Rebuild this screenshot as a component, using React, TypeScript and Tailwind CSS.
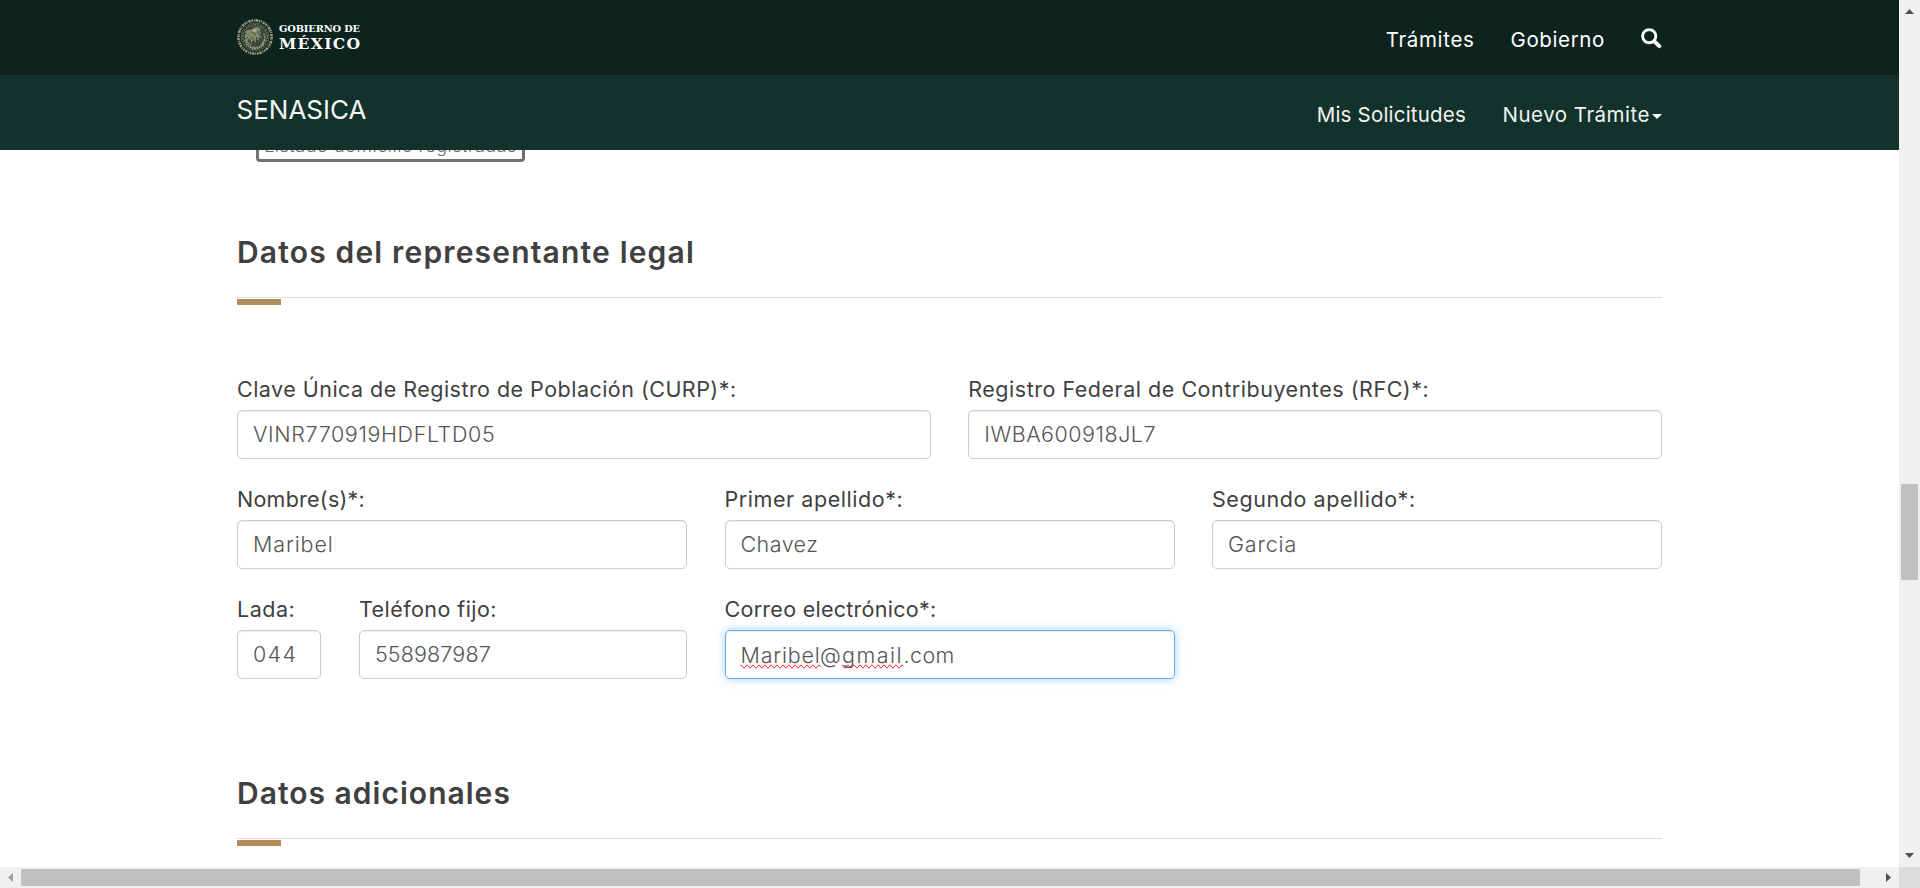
import React from "react";

function Seal() {
  const feathers = [
    "M17 9c3-2 6-1 7 2l-2 1 3 3-3 0 3 4-4-1 2 4-4-2 0 4-3-3-2 4-1-5-4 2 2-4-4 0 3-3c-2-3 1-5 4-4z",
    "M9 15c-1 5 1 9 5 11M27 15c2 5 0 9-4 12M13 28c3 2 7 2 10 0M12 12c-2-1-3 1-2 3",
    "M15 13l4 3M20 12l3 4M14 18l3 4M20 18l-1 5M12 20l2 5M24 20l-2 5",
  ];
  return (
    <svg className="mt-[-2px]" width="36" height="36" viewBox="0 0 36 36" fill="none" aria-hidden="true">
      <circle cx="18" cy="18" r="16.6" stroke="#9d9a7e" strokeWidth="2.6" strokeDasharray="1.7 0.8 0.9 0.9 2.4 0.7" />
      <circle cx="18" cy="18" r="14" stroke="#6b735c" strokeWidth="0.8" />
      <circle cx="18" cy="18" r="12.4" fill="#39493c" stroke="#717760" strokeWidth="1.2" strokeDasharray="2 1" />
      <path d={feathers[0]} fill="#848669" />
      <path d={feathers[1]} stroke="#9a9779" strokeWidth="1.5" strokeDasharray="1.6 0.7" />
      <path d={feathers[2]} stroke="#33443a" strokeWidth="0.9" />
      <path d="M15 11l3-1 2 2-3 1z" fill="#b5b092" />
      <path d="M9.500 25c4 5 13 5 17 0M8 21l3 4M28 21l-3 4" stroke="#a29e80" strokeWidth="1.6" strokeDasharray="1.4 0.8" />
    </svg>
  );
}

function Header() {
  return (
    <header className="shrink-0 text-white">
      <div className="flex h-[75px] items-center justify-between bg-[#0c231e] pr-[237px] pl-[237px]">
        <div className="flex items-center gap-[6px]">
          <Seal />
          <div className="flex flex-col font-['DejaVu_Serif',serif] font-bold whitespace-nowrap">
            <span className="h-[13px] text-[9.8px] leading-[13px] tracking-[-0.12px]">GOBIERNO DE</span>
            <span className="h-[18px] text-[15.6px] leading-[17px] tracking-[1.3px]">MÉXICO</span>
          </div>
        </div>
        <nav className="flex items-center pt-[5px] text-[20.5px] leading-[30px]">
          <a className="tracking-[0.65px]">Trámites</a>
          <a className="ml-[36px] tracking-[0.63px]">Gobierno</a>
          <svg className="mt-[-4px] ml-[36px]" width="21" height="21" viewBox="0 0 21 21" fill="none" stroke="#fff">
            <circle cx="8.200" cy="8.200" r="6.600" strokeWidth="2.900" />
            <path d="M13.300 13.300L18.300 18.200" strokeWidth="3.900" strokeLinecap="round" />
          </svg>
        </nav>
      </div>
      <div className="flex h-[75px] items-center justify-between bg-[#13322b] pr-[237px] pl-[236.5px]">
        <a className="pb-[5px] text-[26px] leading-[36px] text-[#f4f6f5]">SENASICA</a>
        <nav className="flex items-center pt-[5px] text-[20.5px] leading-[30px] text-[#f2f4f3]">
          <a className="tracking-[0.2px]">Mis Solicitudes</a>
          <a className="ml-[36.5px] flex items-center tracking-[0.5px]">
            Nuevo Trámite
            <span className="mt-[2px] ml-[2px] border-x-5 border-t-5 border-x-transparent border-t-white" />
          </a>
        </nav>
      </div>
    </header>
  );
}

function SectionTitle({ text, className }: { text: string; className: string }) {
  return (
    <div className={className}>
      <h3 className="text-[30px] leading-[38px] font-semibold text-[#404041]">{text}</h3>
      <div className="mt-[26px] h-px bg-[#dde0e0]" />
      <div className="mt-px h-[6px] w-[44px] bg-[#b38e5d]" />
    </div>
  );
}

interface FieldProps {
  label: string;
  labelClass: string;
  span: string;
  value?: string;
  valueClass?: string;
  children?: React.ReactNode;
}

function Field({ label, labelClass, span, value, valueClass, children }: FieldProps) {
  return (
    <div className={span}>
      <label className={`block h-[35px] text-[21.5px] leading-[28px] whitespace-nowrap text-[#404041] ${labelClass}`}>
        {label}
      </label>
      {children ?? (
        <input
          defaultValue={value}
          spellCheck={false}
          className={`block h-[49px] w-full rounded-[5px] border border-[#ccc] bg-white px-[15px] pb-[2px] text-[21.5px] font-light text-[#555] shadow-[inset_0_1px_1px_rgba(0,0,0,0.075)] outline-none ${valueClass ?? ""}`}
        />
      )}
    </div>
  );
}

const misspelt = "[text-decoration-line:spelling-error]";

function ScrollArrow({ d, className, color }: { d: string; className: string; color: string }) {
  return (
    <svg className={className} viewBox="0 0 9 9" width="9" height="9" fill={color}>
      <path d={d} />
    </svg>
  );
}

export default function App() {
  return (
    <div className="flex h-[888px] w-full flex-col overflow-hidden bg-white font-['Inter','Liberation_Sans',sans-serif]">
      <div className="flex h-[867px]">
        <div className="flex min-w-0 flex-1 flex-col">
          <Header />
          <main className="w-[1662px] flex-1 overflow-hidden pl-[237px]">
            <button className="mt-[-22px] ml-[19px] block h-[34px] w-[269px] rounded-[4px] border-3 border-[#727272] bg-white pt-[2px] text-[18px] leading-[26px] font-light tracking-[0.5px] whitespace-nowrap text-[#666]">
              Listado domicilio registradas
            </button>

            <SectionTitle text="Datos del representante legal" className="mt-[71px] tracking-[1.17px]" />

            <form className="mt-[70px] grid grid-cols-12 gap-x-[37.5px] gap-y-[26px]">
              <Field span="col-span-6" label="Clave Única de Registro de Población (CURP)*:" labelClass="tracking-[0.47px]" value="VINR770919HDFLTD05" valueClass="tracking-[0.62px]" />
              <Field span="col-span-6" label="Registro Federal de Contribuyentes (RFC)*:" labelClass="tracking-[0.52px]" value="IWBA600918JL7" valueClass="tracking-[0.5px]" />
              <Field span="col-span-4" label="Nombre(s)*:" labelClass="tracking-[0.24px]" value="Maribel" valueClass="tracking-[0.87px]" />
              <Field span="col-span-4" label="Primer apellido*:" labelClass="tracking-[0.56px]" value="Chavez" valueClass="tracking-[0.45px]" />
              <Field span="col-span-4" label="Segundo apellido*:" labelClass="tracking-[0.57px]" value="Garcia" valueClass="tracking-[0.85px]" />
              <Field span="col-span-1" label="Lada:" labelClass="tracking-[0.5px]" value="044" valueClass="tracking-[1.3px]" />
              <Field span="col-span-3" label="Teléfono fijo:" labelClass="tracking-[0.45px]" value="558987987" valueClass="tracking-[0.15px]" />
              <Field span="col-span-4" label="Correo electrónico*:" labelClass="tracking-[0.27px]">
                <div className="flex h-[49px] items-center rounded-[5px] border border-[#66afe9] bg-white px-[15px] text-[21.5px] leading-[30px] font-light text-[#555] shadow-[inset_0_1px_1px_rgba(0,0,0,0.075),0_0_10px_rgba(102,175,233,0.6)]">
                  <span className={`w-[79.5px] tracking-[0.8px] ${misspelt}`}>Maribel</span>
                  <span className="w-[22px]">@</span>
                  <span className={`w-[61.5px] tracking-[1.5px] ${misspelt}`}>gmail</span>
                  <span className="tracking-[0.4px]">.com</span>
                </div>
              </Field>
            </form>

            <SectionTitle text="Datos adicionales" className="mt-[95px] tracking-[1.02px]" />
          </main>
        </div>

        <div className="flex w-[21px] shrink-0 flex-col items-center bg-[#f0f0f0] pt-[7px] pb-[7px]">
          <ScrollArrow d="M0 7h9L4.500 2z" className="" color="#505050" />
          <div className="mt-[468px] h-[96px] w-[17px] bg-[#c1c1c1]" />
          <ScrollArrow d="M0 2h9L4.500 7z" className="mt-auto" color="#505050" />
        </div>
      </div>

      <div className="flex h-[21px] w-full bg-[#f0f0f0]">
        <div className="flex flex-1 items-center">
          <ScrollArrow d="M7 0v9L2 4.500z" className="ml-[6px]" color="#a3a3a3" />
          <div className="ml-[6px] h-[17px] w-[1839px] bg-[#c1c1c1]" />
          <ScrollArrow d="M2 0v9L7 4.500z" className="ml-[24px]" color="#505050" />
        </div>
        <div className="w-[21px] bg-[#dcdcdc]" />
      </div>
    </div>
  );
}
